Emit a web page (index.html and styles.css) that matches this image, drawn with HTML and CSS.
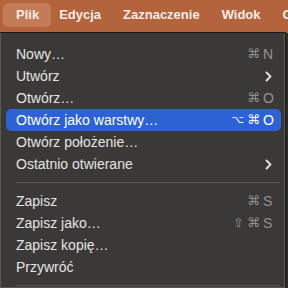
FILE: index.html
```html
<!DOCTYPE html>
<html lang="pl">
<head>
<meta charset="utf-8">
<link rel="stylesheet" href="styles.css">
</head>
<body>
<div class="menubar">
  <div class="mb-item active">Plik</div>
  <div class="mb-item">Edycja</div>
  <div class="mb-item">Zaznaczenie</div>
  <div class="mb-item">Widok</div>
  <div class="mb-item">Okno</div>
</div>
<div class="menu">
  <div class="item"><span class="label">Nowy…</span><span class="sc"><span class="mod">⌘</span><span class="key">N</span></span></div>
  <div class="item"><span class="label">Utwórz</span><svg class="chev" width="7" height="11" viewBox="0 0 7 11"><polyline points="1.5,1.5 5.5,5.5 1.5,9.5" fill="none" stroke="currentColor" stroke-width="1.8" stroke-linecap="round" stroke-linejoin="round"/></svg></div>
  <div class="item"><span class="label">Otwórz…</span><span class="sc"><span class="mod">⌘</span><span class="key">O</span></span></div>
  <div class="item selected"><span class="label">Otwórz jako warstwy…</span><span class="sc"><span class="mod opt">⌥</span><span class="mod">⌘</span><span class="key">O</span></span></div>
  <div class="item"><span class="label">Otwórz położenie…</span></div>
  <div class="item"><span class="label">Ostatnio otwierane</span><svg class="chev" width="7" height="11" viewBox="0 0 7 11"><polyline points="1.5,1.5 5.5,5.5 1.5,9.5" fill="none" stroke="currentColor" stroke-width="1.8" stroke-linecap="round" stroke-linejoin="round"/></svg></div>
  <div class="sep"></div>
  <div class="item"><span class="label">Zapisz</span><span class="sc"><span class="mod">⌘</span><span class="key">S</span></span></div>
  <div class="item"><span class="label">Zapisz jako…</span><span class="sc"><span class="mod">⇧</span><span class="mod">⌘</span><span class="key">S</span></span></div>
  <div class="item"><span class="label">Zapisz kopię…</span></div>
  <div class="item"><span class="label">Przywróć</span></div>
  <div class="sep"></div>
</div>
</body>
</html>
```
FILE: styles.css
```css
html, body {
  margin: 0;
  padding: 0;
}
body {
  width: 288px;
  height: 288px;
  overflow: hidden;
  background: #2b2a29;
  font-family: "Liberation Sans", Arial, sans-serif;
}
.menubar {
  height: 33px;
  background: #b4643c;
  display: flex;
  align-items: flex-start;
  padding: 3px 0 0 3px;
  box-sizing: border-box;
  white-space: nowrap;
  overflow: hidden;
}
.mb-item {
  height: 24px;
  line-height: 24px;
  padding: 0 11px;
  font-size: 13px;
  font-weight: 700;
  color: #f6ece6;
  border-radius: 5px;
  flex: none;
}
.mb-item.active {
  background: #c47c58;
  padding: 0 12px 0 13px;
  margin-right: -3px;
}
.menu {
  width: 285px;
  height: 255px;
  box-sizing: border-box;
  background: #3a3937;
  border: 1px solid #5a5957;
  border-top: none;
  box-shadow: 0 0 0 1px #1a1a1a;
  padding: 10px 3px 0 5px;
  overflow: hidden;
}
.item {
  height: 22px;
  line-height: 22px;
  display: flex;
  align-items: center;
  padding: 0 8px 0 10px;
  font-size: 14px;
  color: #e4e4e3;
  border-radius: 5px;
  white-space: nowrap;
}
.item .label {
  flex: 1;
}
.item.selected {
  background: #2d62d4;
  color: #ffffff;
}
.sc {
  display: flex;
  gap: 3px;
  color: #929291;
}
.selected .sc {
  color: #ffffff;
}
.mod {
  font-family: "DejaVu Sans", sans-serif;
  font-size: 13px;
}
.mod.opt {
  font-size: 11px;
}
.key {
  width: 10px;
  font-size: 14px;
  text-align: left;
}
.chev {
  color: #e4e4e3;
  margin-right: 1px;
}
.sep {
  height: 1px;
  margin: 7px 1px 7px 10px;
  background: #575654;
}
```
